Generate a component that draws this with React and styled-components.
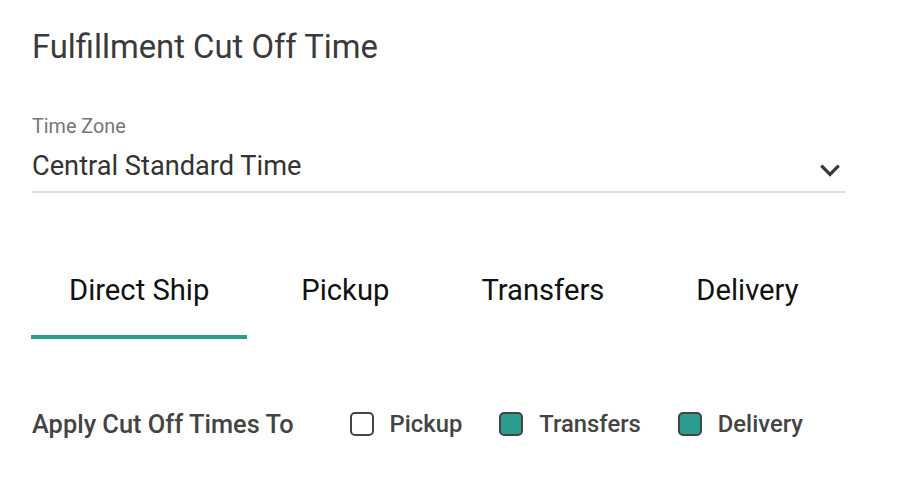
import React, { useState } from "react";
import styled, { createGlobalStyle } from "styled-components";

const Global = createGlobalStyle`
  html, body { margin: 0; padding: 0; background: #fff; }
  body { font-family: Roboto, "Noto Sans", sans-serif; }
`;

const Page = styled.div`
  padding: 0 0 0 32px;
  width: 813px;
`;

const Title = styled.h1`
  margin: 0;
  padding-top: 27px;
  font-size: 32.8px;
  line-height: 40px;
  font-weight: 400;
  color: #3a3a3a;
`;

const Field = styled.div`
  margin-top: 48px;
  border-bottom: 2px solid #dedede;
  padding-bottom: 8px;
`;

const FieldLabel = styled.div`
  font-size: 19.8px;
  line-height: 24px;
  color: #757575;
`;

const SelectRow = styled.div`
  display: flex;
  align-items: center;
  justify-content: space-between;
  margin-top: 10px;
`;

const SelectValue = styled.div`
  font-size: 27.2px;
  line-height: 32px;
  color: #333;
`;

const Chevron = styled.svg`
  width: 26px;
  height: 26px;
  margin-right: 2px;
  margin-top: 8px;
`;

const Tabs = styled.div`
  display: flex;
  gap: 16px;
  margin-top: 68px;
  margin-left: -1px;
`;

const Tab = styled.button`
  border: none;
  background: none;
  font-family: inherit;
  font-size: 29.2px;
  line-height: 34px;
  color: #111;
  padding: 12px 38px 28px;
  border-bottom: 4px solid ${(p) => (p.$active ? "#2a9d8f" : "transparent")};
  cursor: pointer;
`;

const ApplyRow = styled.div`
  display: flex;
  align-items: center;
  margin-top: 70px;
  line-height: 30px;
`;

const ApplyLabel = styled.div`
  font-size: 25.4px;
  font-weight: 500;
  color: #444;
  margin-right: 56px;
`;

const Option = styled.label`
  display: flex;
  align-items: center;
  gap: 16px;
  margin-right: 37px;
  font-size: 23.8px;
  font-weight: 500;
  color: #444;
  cursor: pointer;
`;

const Box = styled.span`
  width: 20px;
  height: 20px;
  border: 2px solid #444;
  border-radius: 5px;
  background: ${(p) => (p.$checked ? "#2a9d8f" : "#fff")};
`;

const tabs = ["Direct Ship", "Pickup", "Transfers", "Delivery"];

export default function App() {
  const [active, setActive] = useState(0);
  const [checks, setChecks] = useState({ Pickup: false, Transfers: true, Delivery: true });
  return (
    <Page>
      <Global />
      <Title>Fulfillment Cut Off Time</Title>
      <Field>
        <FieldLabel>Time Zone</FieldLabel>
        <SelectRow>
          <SelectValue>Central Standard Time</SelectValue>
          <Chevron viewBox="0 0 24 24" fill="none" stroke="#3a3a3a" strokeWidth="3" strokeLinecap="square">
            <path d="M5 9l7 7 7-7" />
          </Chevron>
        </SelectRow>
      </Field>
      <Tabs>
        {tabs.map((t, i) => (
          <Tab key={t} $active={i === active} onClick={() => setActive(i)}>
            {t}
          </Tab>
        ))}
      </Tabs>
      <ApplyRow>
        <ApplyLabel>Apply Cut Off Times To</ApplyLabel>
        {Object.keys(checks).map((k) => (
          <Option key={k} onClick={() => setChecks({ ...checks, [k]: !checks[k] })}>
            <Box $checked={checks[k]} />
            {k}
          </Option>
        ))}
      </ApplyRow>
    </Page>
  );
}
